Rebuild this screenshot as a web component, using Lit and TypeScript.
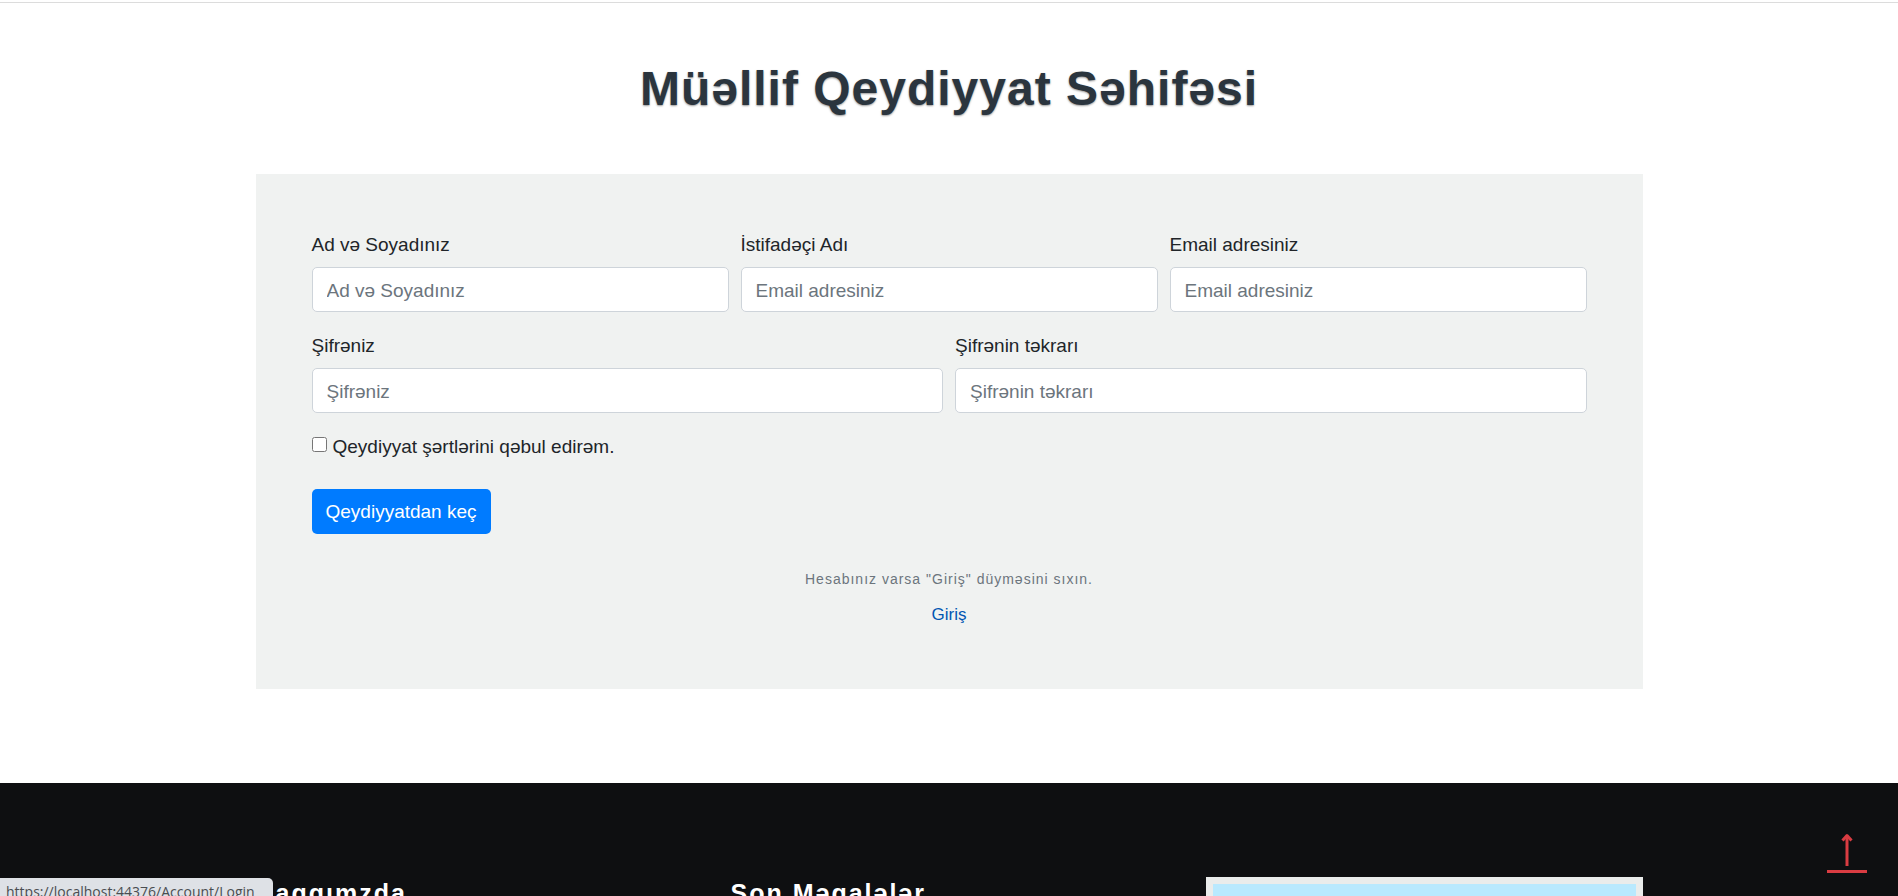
import { LitElement, html, css } from "lit";
import { customElement } from "lit/decorators.js";

interface Field {
  id: string;
  label: string;
  placeholder: string;
  type: string;
}

const accountFields: Field[] = [
  { id: "fullname", label: "Ad və Soyadınız", placeholder: "Ad və Soyadınız", type: "text" },
  { id: "username", label: "İstifadəçi Adı", placeholder: "Email adresiniz", type: "text" },
  { id: "email", label: "Email adresiniz", placeholder: "Email adresiniz", type: "email" },
];

const passwordFields: Field[] = [
  { id: "password", label: "Şifrəniz", placeholder: "Şifrəniz", type: "password" },
  { id: "confirm", label: "Şifrənin təkrarı", placeholder: "Şifrənin təkrarı", type: "password" },
];

@customElement("register-form")
class RegisterForm extends LitElement {
  static styles = css`
    :host {
      display: block;
      background: #f0f2f1;
      padding: 56px;
    }
    .row {
      display: flex;
      gap: 12px;
      margin-bottom: 19px;
    }
    .group {
      flex: 1 1 0;
      min-width: 0;
      display: flex;
      flex-direction: column;
      gap: 8px;
    }
    .label {
      line-height: 29px;
    }
    .input {
      box-sizing: border-box;
      width: 100%;
      height: 45px;
      padding: 8px 14px 6px;
      border: 1px solid #ced4da;
      border-radius: 5px;
      background: #fff;
      color: #495057;
      font: inherit;
    }
    .input::placeholder {
      color: #6c757d;
      opacity: 1;
    }
    .terms {
      display: flex;
      align-items: center;
      gap: 6px;
      margin-bottom: 28px;
      line-height: 29px;
    }
    .check {
      width: 15px;
      height: 15px;
      margin: 0 0 4px;
    }
    .submit {
      height: 45px;
      padding: 0 14px;
      border: 0;
      border-radius: 5px;
      background: #007bff;
      color: #fff;
      font: inherit;
      cursor: pointer;
    }
    .hint {
      margin: 32px 0 8px;
      text-align: center;
      color: #6c757d;
      font-size: 14px;
      line-height: 27px;
      letter-spacing: 1px;
    }
    .login {
      margin: 0 0 5px;
      text-align: center;
      font-size: 17px;
      line-height: 27px;
    }
    .link {
      color: #0056b3;
      text-decoration: none;
    }
  `;

  private group(f: Field) {
    return html`<div class="group">
      <label class="label" for=${f.id}>${f.label}</label>
      <input class="input" id=${f.id} type=${f.type} placeholder=${f.placeholder} />
    </div>`;
  }

  render() {
    return html`
      <form @submit=${(e: Event) => e.preventDefault()}>
        <div class="row">${accountFields.map((f) => this.group(f))}</div>
        <div class="row">${passwordFields.map((f) => this.group(f))}</div>
        <div class="terms">
          <input class="check" type="checkbox" id="terms" />
          <label for="terms">Qeydiyyat şərtlərini qəbul edirəm.</label>
        </div>
        <button class="submit" type="submit">Qeydiyyatdan keç</button>
      </form>
      <p class="hint">Hesabınız varsa "Giriş" düyməsini sıxın.</p>
      <p class="login"><a class="link" href="#login">Giriş</a></p>
    `;
  }
}

@customElement("site-footer")
class SiteFooter extends LitElement {
  static styles = css`
    :host {
      display: block;
      background: #0e0f11;
      color: #fff;
      padding: 94px 24px;
    }
    .columns {
      max-width: 1387px;
      margin: 0 auto;
      display: grid;
      grid-template-columns: repeat(3, 1fr);
      gap: 38px;
    }
    .heading {
      margin: 0;
      font-size: 25px;
      line-height: 32px;
      letter-spacing: 2px;
    }
    .map {
      box-sizing: border-box;
      height: 240px;
      border: 7px solid #eaeceb;
      background: #b9e9fe;
    }
  `;

  render() {
    return html`<div class="columns">
      <h3 class="heading">Haqqımzda</h3>
      <h3 class="heading">Son Məqalələr</h3>
      <div class="map"></div>
    </div>`;
  }
}

@customElement("app-root")
class AppRoot extends LitElement {
  static styles = css`
    :host {
      display: block;
      height: 100vh;
      overflow: hidden;
      background: #fff;
      color: #212529;
      font-family: "Liberation Sans", Arial, sans-serif;
      font-size: 19px;
    }
    .page {
      display: flow-root;
    }
    .topline {
      height: 1px;
      margin-top: 2px;
      background: #dcdcdc;
    }
    .main {
      max-width: 1387px;
      margin: 0 auto;
      padding: 57px 24px 94px;
    }
    .title {
      margin: 0 0 56px;
      text-align: center;
      color: #2b353e;
      font-size: 48px;
      line-height: 58px;
      letter-spacing: 1px;
      text-shadow: 0 1px 2px rgba(0, 0, 0, 0.4);
    }
    .top {
      position: fixed;
      right: 30px;
      bottom: 22px;
    }
    .top svg {
      display: block;
    }
    .status {
      position: fixed;
      left: 0;
      bottom: -8px;
      box-sizing: border-box;
      height: 26px;
      padding: 0 18px 0 6px;
      border-top-right-radius: 5px;
      background: #dee1e6;
      color: #4a4d51;
      font-family: "Open Sans", "Noto Sans", sans-serif;
      font-size: 14px;
      line-height: 28px;
    }
  `;

  render() {
    return html`
      <div class="page">
        <div class="topline"></div>
        <main class="main">
          <h1 class="title">Müəllif Qeydiyyat Səhifəsi</h1>
          <register-form></register-form>
        </main>
        <site-footer></site-footer>
      </div>
      <a class="top" href="#top" aria-label="Yuxarı">
        <svg width="42" height="42" viewBox="0 0 42 42" fill="none" stroke="#d93c42">
          <path d="M21 34V4" stroke-width="3" />
          <path d="M16.500 8.500L21 3.500L25.500 8.500" stroke-width="3" stroke-linejoin="round" />
          <path d="M1 39.500H41" stroke-width="3" />
        </svg>
      </a>
      <div class="status">https://localhost:44376/Account/Login</div>
    `;
  }
}
